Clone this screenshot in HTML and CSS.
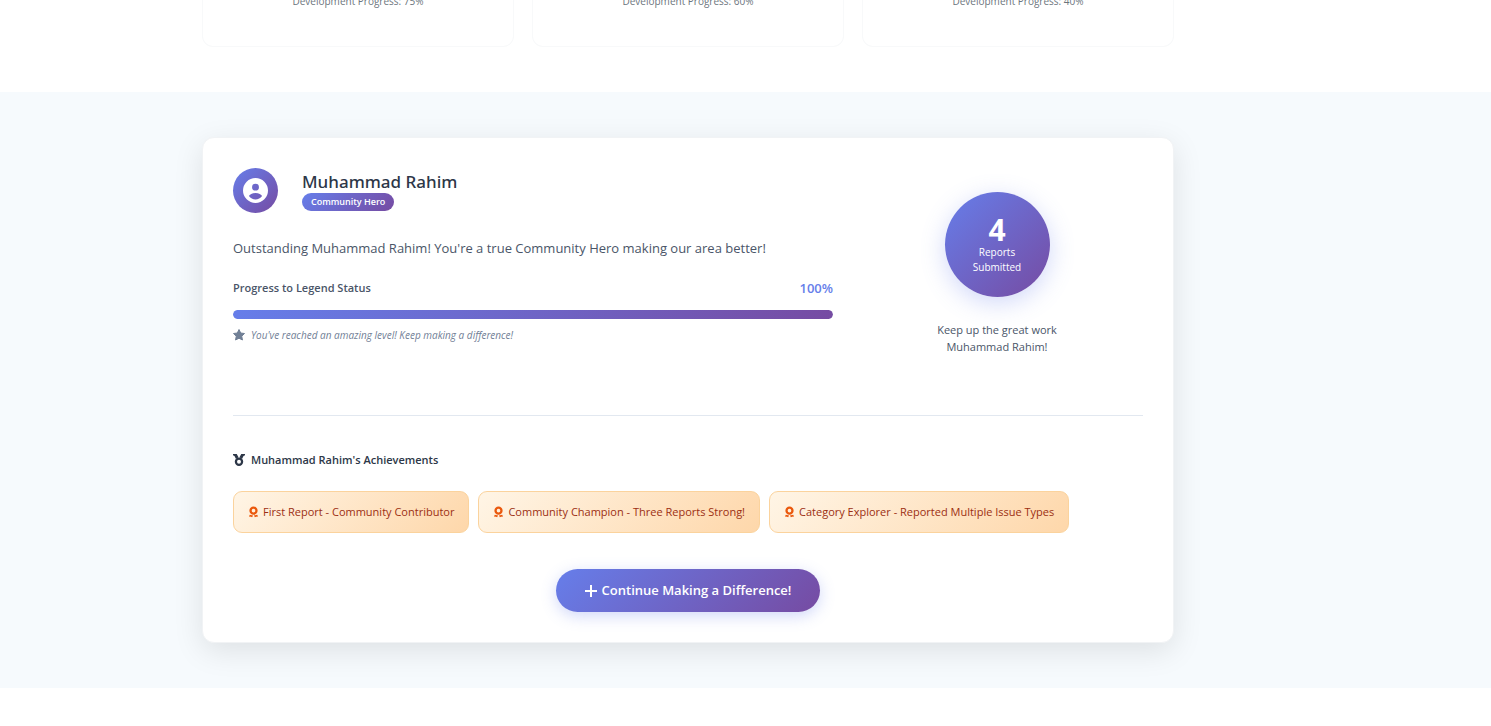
FILE: index.html
```html
<!DOCTYPE html>
<html lang="en">
<head>
<meta charset="utf-8">
<title>Community Progress</title>
<meta name="viewport" content="width=device-width, initial-scale=1">
<link rel="stylesheet" href="styles.css">
</head>
<body>
<svg class="sprite" aria-hidden="true">
  <symbol id="award" viewBox="0 0 24 24"><circle cx="12" cy="9" r="6.500" fill="none" stroke="currentColor" stroke-width="5"/><path d="M4 18l7 1.500-2 4-2.500-1L2 22ZM20 18l-7 1.500 2 4 2.500-1 4.500-.5Z"/></symbol>
</svg>
<section class="features">
  <div class="container feature-grid">
    <article class="feature-card"><p>Development Progress: 75%</p></article>
    <article class="feature-card"><p>Development Progress: 60%</p></article>
    <article class="feature-card"><p>Development Progress: 40%</p></article>
  </div>
</section>
<main class="progress-section">
  <div class="container profile-card">
    <div class="overview">
      <div class="summary">
        <header class="profile">
          <div class="avatar"><svg viewBox="0 0 24 24" aria-hidden="true"><path fill-rule="evenodd" d="M12 0a12 12 0 1 0 0 24 12 12 0 0 0 0-24Zm0 5.500a3.300 3.300 0 1 1 0 6.600 3.300 3.300 0 0 1 0-6.600Zm0 8.800c3.200 0 5.700 1.300 6.300 3-1.500 2-3.800 3.400-6.300 3.400s-4.800-1.400-6.300-3.400c.6-1.700 3.100-3 6.300-3Z"/></svg></div>
          <div>
            <h1 class="name">Muhammad Rahim</h1>
            <span class="rank">Community Hero</span>
          </div>
        </header>
        <p class="message">Outstanding Muhammad Rahim! You're a true Community Hero making our area better!</p>
        <div class="progress-head"><span class="progress-label">Progress to Legend Status</span><span class="percent">100%</span></div>
        <div class="track"><div class="fill" style="width: 100%"></div></div>
        <p class="hint"><svg viewBox="0 0 24 24" aria-hidden="true"><path stroke="currentColor" stroke-width="2" stroke-linejoin="round" d="m12 1 3.400 7 7.600 1-5.500 5.400L18.900 22 12 18.400 5.100 22l1.400-7.600L1 9l7.600-1Z"/></svg><em>You've reached an amazing level! Keep making a difference!</em></p>
      </div>
      <aside class="stats">
        <div class="count"><strong>4</strong><span>Reports<br>Submitted</span></div>
        <p class="cheer">Keep up the great work<br>Muhammad Rahim!</p>
      </aside>
    </div>
    <section class="achievements">
      <h2 class="achievements-title"><svg viewBox="0 0 24 24" aria-hidden="true"><circle cx="12" cy="15.500" r="6.200" fill="none" stroke="currentColor" stroke-width="4.500"/><path d="M0 0h7.500l3.500 6.500-5 3.500L3 4 0 2.500ZM24 0h-7.500L13 6.500l5 3.500 3-6 3-1.500Z"/></svg>Muhammad Rahim's Achievements</h2>
      <ul class="badges">
        <li><svg aria-hidden="true"><use href="#award"/></svg>First Report - Community Contributor</li>
        <li><svg aria-hidden="true"><use href="#award"/></svg>Community Champion - Three Reports Strong!</li>
        <li><svg aria-hidden="true"><use href="#award"/></svg>Category Explorer - Reported Multiple Issue Types</li>
      </ul>
    </section>
    <div class="action">
      <button type="button" class="cta"><svg viewBox="0 0 12 12" aria-hidden="true"><path d="M5 0h2v5h5v2H7v5H5V7H0V5h5Z"/></svg>Continue Making a Difference!</button>
    </div>
  </div>
</main>
</body>
</html>
```
FILE: styles.css
```css
* { box-sizing: border-box; }
body, h1, h2, p, ul { margin: 0; padding: 0; }
body {
  --brand: linear-gradient(135deg, #667eea 0%, #764ba2 100%);
  background: #fff;
  color: #2d3748;
  font-family: "Segoe UI", "Open Sans", "Noto Sans", sans-serif;
  font-size: 14px;
}
svg { fill: currentColor; flex: none; }
.sprite { display: none; }
.container { max-width: 972px; margin: 0 auto; }
.features { margin-top: -20px; padding: 0 115px 45px 0; }
.feature-grid { display: grid; grid-template-columns: repeat(3, 1fr); gap: 18px; }
.feature-card {
  padding: 12px 20px 36px;
  border: 1px solid #f8f9fa;
  border-top: 0;
  border-radius: 0 0 11px 11px;
  text-align: center;
  font-size: 10px;
  line-height: 18px;
  color: #6c757d;
}
.progress-section { padding: 45px 115px 45px 0; background: #f6fafd; }
.profile-card {
  padding: 30px;
  border: 1px solid #f1f3f5;
  border-radius: 12px;
  background: #fff;
  box-shadow: 0 8px 30px rgba(0, 0, 0, 0.1);
}
.overview { display: grid; grid-template-columns: 600px 1fr; gap: 18px; }
.profile { display: flex; align-items: center; gap: 24px; }
.avatar {
  display: grid;
  place-items: center;
  width: 45px;
  height: 45px;
  border-radius: 50%;
  background: var(--brand);
  color: #fff;
}
.avatar svg { width: 25px; height: 25px; }
.name { font: 500 17px/22px "Segoe UI", "Noto Sans", sans-serif; }
.rank {
  display: block;
  width: fit-content;
  padding: 0 9px;
  border-radius: 9px;
  background: var(--brand);
  color: #fff;
  font-size: 9px;
  line-height: 18px;
  font-weight: 600;
}
.message { margin-top: 24px; font-size: 13px; line-height: 22px; color: #4a5568; }
.progress-head { display: flex; justify-content: space-between; margin-top: 20px; line-height: 18px; color: #4a5568; }
.progress-label { font-size: 11px; font-weight: 600; }
.percent { font-size: 13px; font-weight: 600; color: #667eea; }
.track { height: 9px; margin-top: 13px; border-radius: 5px; overflow: hidden; background: #e2e8f0; }
.fill { height: 100%; border-radius: 5px; background: var(--brand); }
.hint { display: flex; align-items: center; gap: 6px; margin-top: 7px; font-size: 10px; line-height: 18px; color: #718096; }
.hint svg { width: 12px; height: 12px; }
.stats { display: flex; flex-direction: column; align-items: center; padding-top: 24px; }
.count {
  display: flex;
  flex-direction: column;
  align-items: center;
  justify-content: center;
  width: 105px;
  height: 105px;
  border-radius: 50%;
  background: var(--brand);
  box-shadow: 0 6px 24px rgba(102, 126, 234, 0.3);
  color: #fff;
  font-size: 10px;
  line-height: 15px;
  text-align: center;
}
.count strong { font-size: 30px; line-height: 30px; }
.cheer { margin-top: 24px; font-size: 11px; line-height: 17px; color: #4a5568; text-align: center; }
.achievements { margin-top: 60px; padding-top: 35px; border-top: 1px solid #e2e8f0; }
.achievements-title { display: flex; align-items: center; gap: 6px; font-size: 11px; line-height: 18px; font-weight: 600; }
.achievements-title svg { width: 12px; height: 12px; }
.badges { display: flex; flex-wrap: wrap; gap: 9px; margin-top: 22px; list-style: none; }
.badges li {
  display: flex;
  align-items: center;
  gap: 4px;
  padding: 11px 14px;
  border: 1px solid #fbd39d;
  border-radius: 9px;
  background: linear-gradient(135deg, #fff5e6 0%, #fed7aa 100%);
  color: #9c2f12;
  font-size: 11px;
  line-height: 18px;
  font-weight: 500;
}
.badges svg { width: 11px; height: 12px; color: #ea580c; }
.action { display: flex; justify-content: center; margin-top: 36px; }
.cta {
  display: flex;
  align-items: center;
  gap: 5px;
  padding: 11px 29px;
  border: 0;
  border-radius: 22px;
  background: var(--brand);
  box-shadow: 0 4px 15px rgba(102, 126, 234, 0.3);
  color: #fff;
  font: 600 13px/21px "Segoe UI", "Open Sans", "Noto Sans", sans-serif;
  cursor: pointer;
}
.cta svg { width: 12px; height: 12px; }
```
